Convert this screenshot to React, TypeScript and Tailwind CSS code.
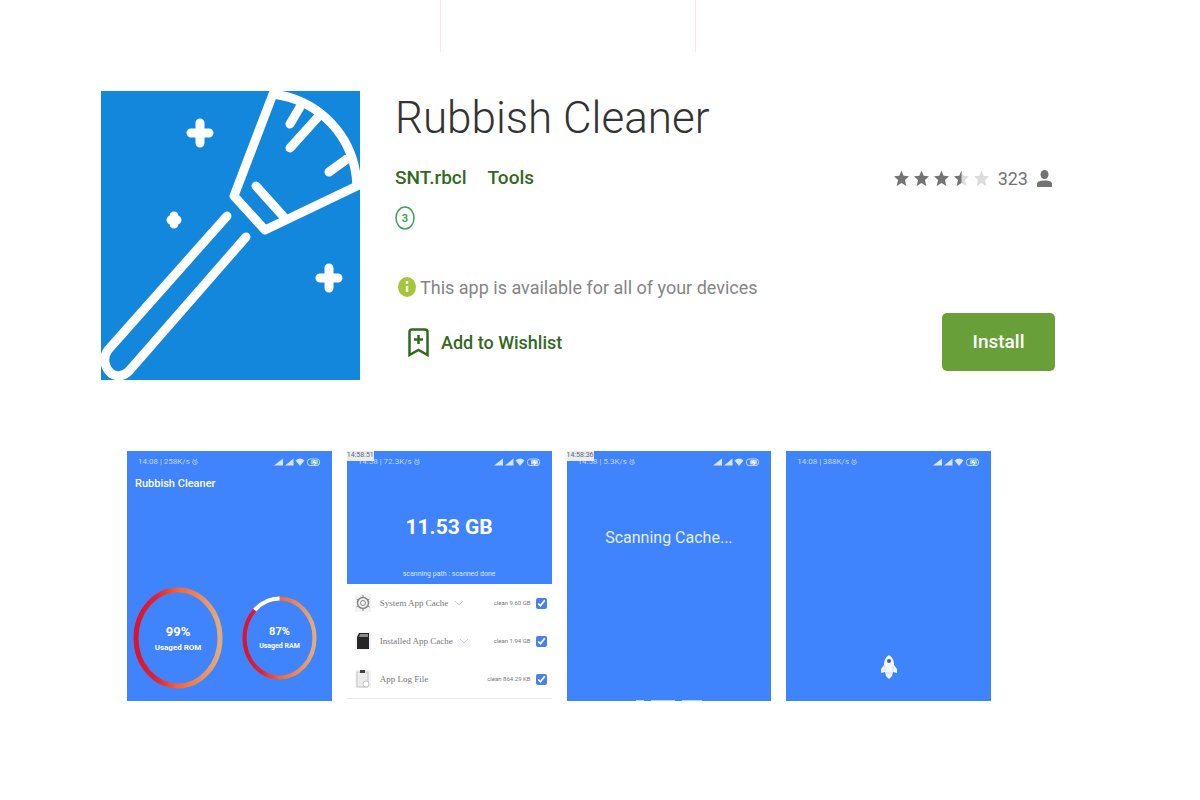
import React from 'react';

type StarFill = 'full' | 'half' | 'empty';

const STARS: StarFill[] = ['full', 'full', 'full', 'half', 'empty'];

const STAR_PATH = 'M8 0l2.3 5.6 5.7.5-4.300 4.100 1.400 6.300L8 13.200l-5.100 3.300 1.400-6.300L0 6.100l5.700-.5z';

/** App logo: a white brush with sparkles on blue */
const AppLogo = () => (
  <svg
    viewBox="0 0 259 289"
    role="img"
    aria-label="Rubbish Cleaner logo"
    className="h-[289px] w-[259px] shrink-0 bg-[#1287dc]"
    fill="none"
    stroke="white"
    strokeWidth="9"
    strokeLinecap="round"
    strokeLinejoin="round"
  >
    {/* brush head */}
    <path d="M172 3L133 105L164 139L256 95C254 45 218 9 172 3Z" />
    <path d="M199 16L189 33M217 26L189 57M246 68L228 81M155 95L182 125" />
    {/* handle */}
    <path d="M126 125L7 259C1 267 4 278 11 283C17 286 23 285 28 280L145 146" />
    {/* sparkles */}
    <path d="M90 42H108M99 32V52M219 187H237M228 177V197M70 129H76M73 125V133" />
  </svg>
);

const Star = ({ fill }: { fill: StarFill }) => (
  <svg viewBox="0 0 16 17" className="h-[17px] w-[15px]" aria-hidden="true">
    <path d={STAR_PATH} fill={fill === 'full' ? '#737373' : '#dcdcdc'} />
    {fill === 'half' && (
      <path d="M8 0V13.200l-5.100 3.300 1.400-6.300L0 6.100l5.700-.5z" fill="#737373" />
    )}
  </svg>
);

interface StatusBarProps {
  text: string;
  charging?: boolean;
}

/** Android status bar shown on top of each preview */
const StatusBar = ({ text, charging }: StatusBarProps) => (
  <div className="flex h-[21px] items-center justify-between px-[11px] text-[8px] leading-none text-[#c3d8ff]">
    <span className="flex items-center gap-[2px] whitespace-nowrap">
      {text}
      <svg viewBox="0 0 8 10" className="h-[8px] w-[6px]" fill="none" stroke="currentColor" aria-hidden="true">
        <circle cx="4" cy="5.500" r="3" />
        <path d="M4 4V6H5.500M1 2L2.500 1M7 2L5.500 1" />
      </svg>
    </span>
    <svg viewBox="0 0 47 10" className="h-[10px] w-[47px]" aria-hidden="true">
      <path d="M0 8.500L9 1.500V8.500ZM11 8.500L19.500 1.500V8.500Z" fill="#d5e4ff" />
      <path d="M21.500 3.500Q26 -.5 30.500 3.500L26 9Z" fill="#d5e4ff" />
      <rect x="33.500" y="2" width="12" height="6.500" rx="2.500" fill="none" stroke="#c3d8ff" />
      <rect x="37" y="3" width="7" height="4.500" rx="1" fill={charging ? '#8fdcaa' : '#c3d8ff'} />
      <path d="M41 3L39 5.500H42L40.500 8" fill="none" stroke="white" />
    </svg>
  </div>
);

interface GaugeProps {
  id: string;
  percent: string;
  label: string;
  large?: boolean;
}

const Gauge = ({ id, percent, label, large }: GaugeProps) => (
  <div className="grid shrink-0 place-items-center text-center text-white">
    <svg
      viewBox="0 0 90 102"
      preserveAspectRatio="none"
      className={`col-start-1 row-start-1 ${large ? 'h-[102px] w-[90px]' : 'h-[84px] w-[75px]'}`}
      fill="none"
      strokeWidth="5"
      aria-hidden="true"
    >
      <defs>
        <linearGradient id={id}>
          <stop offset="0" stopColor="#d9142c" />
          <stop offset="0.250" stopColor="#df2434" />
          <stop offset="0.500" stopColor="#ec6840" />
          <stop offset="1" stopColor="#e2ac7a" />
        </linearGradient>
      </defs>
      <ellipse cx="45" cy="51" rx="42" ry="48" stroke={`url(#${id})`} />
      {!large && (
        <ellipse cx="45" cy="51" rx="42" ry="48" stroke="white" pathLength="100" strokeDasharray="12 88" strokeDashoffset="-63" />
      )}
    </svg>
    <div className="col-start-1 row-start-1 font-bold">
      <div className={large ? 'text-[13px] leading-5' : 'text-[11px] leading-4'}>{percent}</div>
      <div className={large ? 'text-[8px] leading-3' : 'text-[7px] leading-3'}>{label}</div>
    </div>
  </div>
);

const GearIcon = () => (
  <svg viewBox="0 0 16 18" className="h-[18px] w-4 bg-[#f4f4f4]" fill="none" stroke="#888" aria-hidden="true">
    <circle cx="8" cy="9" r="5.500" strokeWidth="1.500" />
    <circle cx="8" cy="9" r="2.500" />
    <path d="M8 1V4M8 14V17M1.500 5L4 6.500M12 11.500L14.500 13M1.500 13L4 11.500M12 6.500L14.500 5" />
  </svg>
);

const SdCardIcon = () => (
  <svg viewBox="0 0 16 18" className="h-[18px] w-4 bg-[#f4f4f4]" aria-hidden="true">
    <path d="M4 1H14V17H2V5Z" fill="#262626" />
    <path d="M5 2H13V5H4Z" fill="#8c8c8c" />
  </svg>
);

const ClipboardIcon = () => (
  <svg viewBox="0 0 16 18" className="h-[18px] w-4 bg-[#f4f4f4]" aria-hidden="true">
    <path d="M2 2H13V17H2Z" fill="#ececec" stroke="#c5c5c5" />
    <path d="M5 0H10V3H5Z" fill="#444" />
    <circle cx="11" cy="14" r="3" fill="#fff" stroke="#c5c5c5" />
  </svg>
);

const CACHE_ROWS = [
  { id: 'system', name: 'System App Cache', size: 'clean 9.60 GB', icon: <GearIcon />, expandable: true },
  { id: 'installed', name: 'Installed App Cache', size: 'clean 1.94 GB', icon: <SdCardIcon />, expandable: true },
  { id: 'log', name: 'App Log File', size: 'clean 864.29 KB', icon: <ClipboardIcon />, expandable: false },
];

const TimeBadge = ({ time }: { time: string }) => (
  <span className="absolute top-0 left-0 bg-[#e9edf3] pb-[2px] text-[7px] leading-[8px] text-[#666]">{time}</span>
);

const Previews = () => (
  <section aria-label="Screenshots" className="mt-[71px] mr-[209px] ml-[127px] grid grid-cols-4 gap-[15px]">
    <div className="flex h-[250px] flex-col overflow-hidden bg-[#3f83fd]">
      <StatusBar text="14:08 | 258K/s" charging />
      <div className="mt-[3px] pl-2 text-[11px] leading-[18px] font-medium text-white">Rubbish Cleaner</div>
      <div className="mt-auto flex items-center gap-[19px] pb-3 pl-[6px]">
        <Gauge id="rom" percent="99%" label="Usaged ROM" large />
        <Gauge id="ram" percent="87%" label="Usaged RAM" />
      </div>
    </div>

    <div className="relative h-[250px] overflow-hidden">
      <div className="flex h-[133px] flex-col bg-[#3f83fd] text-center text-white">
        <StatusBar text="14:58 | 72.3K/s" />
        <div className="mt-[41px] text-[21px] leading-7 font-bold">11.53 GB</div>
        <div className="mt-auto pb-1 text-[7px] leading-3 text-[#dbe8ff]">scanning path : scanned done</div>
      </div>
      {CACHE_ROWS.map(row => (
        <div key={row.id} className="flex h-[38px] items-center pr-[5px] pl-2 whitespace-nowrap text-[#777]">
          {row.icon}
          <label htmlFor={row.id} className="ml-[9px] font-['Liberation_Serif',serif] text-[9px] leading-3">
            {row.name}
          </label>
          {row.expandable && (
            <svg viewBox="0 0 10 6" className="ml-[6px] h-[6px] w-[10px]" fill="none" stroke="#ccc" aria-hidden="true">
              <path d="M1 1L5 5L9 1" />
            </svg>
          )}
          <span className="ml-auto text-[6px] leading-3">{row.size}</span>
          <input id={row.id} type="checkbox" defaultChecked className="ml-[5px] size-[11px] accent-[#4a80ee]" />
        </div>
      ))}
      <div className="border-t border-[#e8e8e8]" />
      <TimeBadge time="14:58:51" />
    </div>

    <div className="relative flex h-[250px] flex-col overflow-hidden bg-[#3f83fd] text-center">
      <StatusBar text="14:58 | 5.3K/s" />
      <div className="mt-[52px] text-[16px] leading-7 text-[#e6efff]">Scanning Cache...</div>
      <div className="mt-auto flex justify-center gap-[7px]">
        <div className="h-px w-2 bg-[#b5d0ff]" />
        <div className="h-px w-6 bg-[#b5d0ff]" />
        <div className="h-px w-5 bg-[#b5d0ff]" />
      </div>
      <TimeBadge time="14:58:36" />
    </div>

    <div className="flex h-[250px] flex-col overflow-hidden bg-[#3f83fd]">
      <StatusBar text="14:08 | 388K/s" charging />
      <svg viewBox="0 0 16 24" className="mx-auto mt-auto mb-[22px] h-6 w-4" aria-hidden="true">
        <path d="M8 0C3 3 3 8 3 10L0 14V18L4 17L5 21L8 24L11 21L12 17L16 18V14L13 10C13 8 13 3 8 0Z" fill="#f2f7ff" />
        <circle cx="8" cy="6" r="2" fill="#3562b5" />
        <path d="M4 11V16M12 11V16M5 18H11" stroke="#c5daff" />
      </svg>
    </div>
  </section>
);

export default function App() {
  return (
    <main className="bg-white font-[Roboto,sans-serif]">
      <div className="ml-[440px] h-[52px] w-64 border-x border-[#fbe3e6]" />

      <header className="mt-[39px] mr-[145px] ml-[101px] flex gap-[35px]">
        <AppLogo />
        <div className="min-w-0 flex-1">
          <h1 className="text-[44px] leading-[54px] font-light text-[#333]">Rubbish Cleaner</h1>

          <div className="mt-[21px] flex h-6 items-center justify-between">
            <div className="flex gap-[21px] text-[19px] font-medium text-[#33691e]">
              <a href="#developer">SNT.rbcl</a>
              <a href="#tools">Tools</a>
            </div>
            <div className="flex items-center gap-[5px] pr-[3px] text-[18px] text-[#737373]">
              {STARS.map((fill, i) => (
                <Star key={i} fill={fill} />
              ))}
              <span className="ml-1">323</span>
              <svg viewBox="0 0 15 17" className="ml-1 h-[17px] w-[15px]" fill="#737373" aria-label="ratings">
                <ellipse cx="7.500" cy="4.500" rx="4" ry="4.500" />
                <path d="M0 17V14C0 11 4 10.500 7.500 10.500S15 11 15 14V17Z" />
              </svg>
            </div>
          </div>

          <svg viewBox="0 0 20 24" className="mt-4 h-6 w-5" role="img" aria-label="Rated for 3+">
            <ellipse cx="10" cy="12" rx="9" ry="11" fill="none" stroke="#43a057" strokeWidth="1.500" />
            <text x="10" y="16" textAnchor="middle" fontSize="11" fontWeight="700" fill="#43a057">
              3
            </text>
          </svg>

          <p className="mt-[45px] flex h-6 items-center gap-1 pl-[3px] text-[18px] text-[#858585]">
            <svg viewBox="0 0 18 20" className="h-5 w-[18px]" aria-hidden="true">
              <ellipse cx="9" cy="10" rx="9" ry="10" fill="#a4c639" />
              <path d="M9 4V7M9 9V15" stroke="white" strokeWidth="2.500" />
            </svg>
            This app is available for all of your devices
          </p>

          <div className="mt-[14px] flex items-center justify-between">
            <button type="button" className="flex items-center gap-3 pl-[13px] text-[18px] font-medium text-[#33691e]">
              <svg viewBox="0 0 21 29" className="h-[29px] w-[21px]" fill="none" stroke="currentColor" strokeWidth="2.500" aria-hidden="true">
                <path d="M1.500 27V4Q1.500 1.500 4 1.500H17Q19.500 1.500 19.500 4V27L10.500 22Z" />
                <path d="M10.500 7V16M6 11.500H15" />
              </svg>
              Add to Wishlist
            </button>
            <button type="button" className="h-[58px] w-[113px] rounded-[5px] bg-[#689f38] text-[19px] font-medium text-white">
              Install
            </button>
          </div>
        </div>
      </header>

      <Previews />
    </main>
  );
}
